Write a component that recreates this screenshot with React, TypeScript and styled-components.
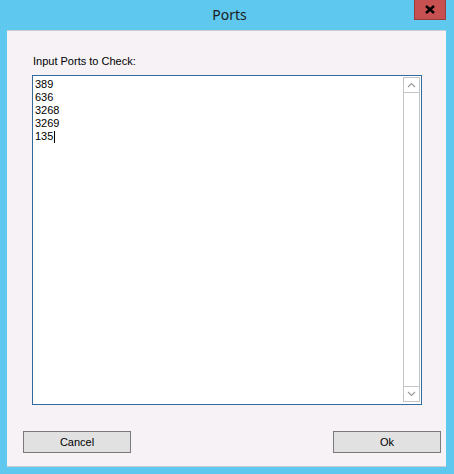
import React from 'react';
import styled, { createGlobalStyle } from 'styled-components';

const ports = ['389', '636', '3268', '3269', '135'];

const GlobalStyle = createGlobalStyle`
  html, body {
    margin: 0;
    padding: 0;
    background: #5fc8ee;
  }
  body {
    font-family: "Liberation Sans", Arial, sans-serif;
  }
`;

const Chevron: React.FC<{ down?: boolean }> = ({ down }) => (
  <svg width="9" height="6" viewBox="0 0 9 6">
    <path
      d={down ? 'M1 1 L4.5 4.5 L8 1' : 'M1 5 L4.5 1.5 L8 5'}
      fill="none"
      stroke="#9a9a9a"
      strokeWidth="1.2"
    />
  </svg>
);

const App: React.FC = () => {
  return (
    <>
      <GlobalStyle />
      <StWindow>
        <StTitleBar>
          <span />
          <StTitle>Ports</StTitle>
          <StCloseButton aria-label="Close">
            <svg width="10" height="9" viewBox="0 0 10 9">
              <path d="M1 1 L9 8 M9 1 L1 8" stroke="#000" strokeWidth="2.4" />
            </svg>
          </StCloseButton>
        </StTitleBar>

        <StClient>
          <StLabel>Input Ports to Check:</StLabel>
          <StTextBox>
            <StTextContent>
              {ports.map((port, index) => (
                <StLine key={port}>
                  {port}
                  {index === ports.length - 1 && <StCaret />}
                </StLine>
              ))}
            </StTextContent>
            <StScrollBar>
              <StScrollButton>
                <Chevron />
              </StScrollButton>
              <StTrack />
              <StScrollButton $bottom>
                <Chevron down />
              </StScrollButton>
            </StScrollBar>
          </StTextBox>

          <StButtonRow>
            <StButton>Cancel</StButton>
            <StButton>Ok</StButton>
          </StButtonRow>
        </StClient>
      </StWindow>
    </>
  );
};

export default App;

const StWindow = styled.div`
  display: flex;
  flex-direction: column;
  width: 454px;
  height: 474px;
  background: #5fc8ee;
  box-sizing: border-box;
  padding: 0 8px 7px 7px;
`;

const StTitleBar = styled.div`
  display: grid;
  grid-template-columns: 1fr auto 1fr;
  align-items: start;
  height: 30px;
`;

const StTitle = styled.div`
  font-family: "Noto Sans", "Open Sans", sans-serif;
  font-size: 14px;
  line-height: 30px;
  color: #1b1b1b;
  padding-left: 6px;
`;

const StCloseButton = styled.button`
  justify-self: end;
  display: flex;
  align-items: center;
  justify-content: center;
  width: 32px;
  height: 20px;
  padding: 0;
  border: 1px solid #9b3b3b;
  border-top: none;
  background: #c75050;
  cursor: pointer;
`;

const StClient = styled.div`
  flex: 1;
  display: flex;
  flex-direction: column;
  background: #f6f2f6;
  border-top: 1px solid #c8cdd2;
  border-bottom: 1px solid #c8cdd2;
  padding: 24px 0 0;
`;

const StLabel = styled.div`
  font-size: 11px;
  line-height: 13px;
  color: #000;
  padding-left: 26px;
`;

const StTextBox = styled.div`
  display: flex;
  width: 390px;
  height: 330px;
  margin: 7px 0 0 25px;
  box-sizing: border-box;
  border: 1px solid #336a9c;
  background: #fff;
`;

const StTextContent = styled.div`
  flex: 1;
  padding: 2px 2px 0;
  font-size: 11px;
  line-height: 13px;
  color: #000;
`;

const StLine = styled.div`
  display: flex;
  align-items: center;
  height: 13px;
`;

const StCaret = styled.span`
  display: inline-block;
  width: 1px;
  height: 12px;
  background: #000;
  margin-left: 1px;
`;

const StScrollBar = styled.div`
  display: flex;
  flex-direction: column;
  width: 17px;
  margin: 1px 1px 2px 0;
  box-sizing: border-box;
  border-left: 1px solid #c4c4c4;
  border-right: 1px solid #c4c4c4;
`;

const StScrollButton = styled.div<{ $bottom?: boolean }>`
  display: flex;
  align-items: center;
  justify-content: center;
  height: 16px;
  border-top: ${({ $bottom }) => ($bottom ? '1px solid #c4c4c4' : '1px solid #c4c4c4')};
  border-bottom: ${({ $bottom }) => ($bottom ? '1px solid #c4c4c4' : '1px solid #c4c4c4')};
  box-sizing: border-box;
`;

const StTrack = styled.div`
  flex: 1;
`;

const StButtonRow = styled.div`
  display: flex;
  justify-content: space-between;
  margin-top: 26px;
  padding: 0 5px 0 16px;
`;

const StButton = styled.button`
  width: 108px;
  height: 22px;
  padding: 0;
  border: 1px solid #7a7a7a;
  background: #e1e1e1;
  font-family: "Liberation Sans", Arial, sans-serif;
  font-size: 11px;
  color: #000;
  cursor: pointer;
`;
